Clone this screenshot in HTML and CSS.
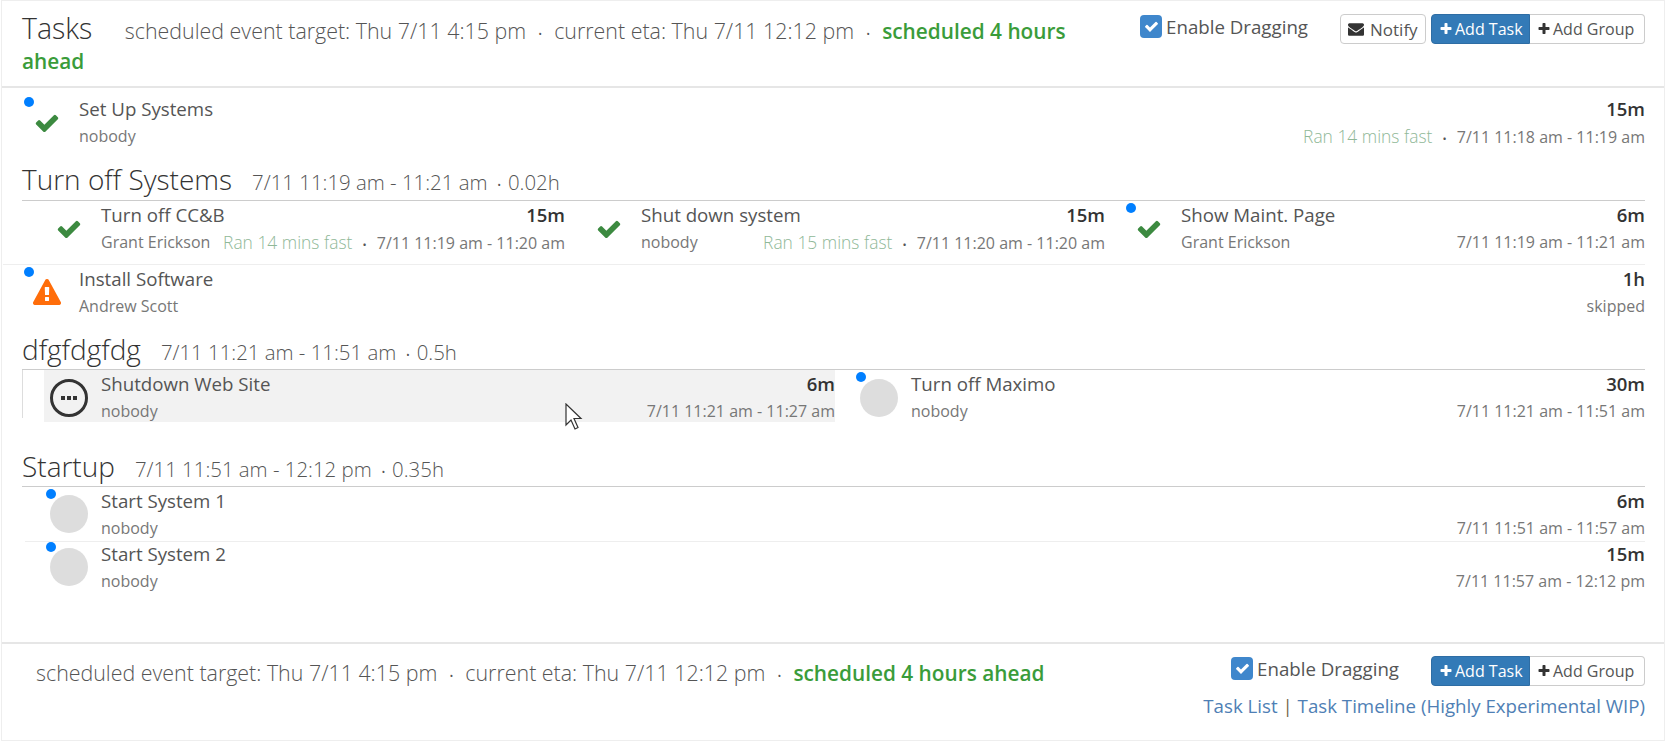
FILE: index.html
```html
<!DOCTYPE html>
<html lang="en">
<head>
    <meta charset="UTF-8">
    <title>Tasks</title>
    <link rel="stylesheet" href="styles.css">
</head>
<body>
<svg class="defs" width="0" height="0">
    <symbol id="i-check" viewBox="0 0 1792 1792"><path d="M1671 566q0 40-28 68l-724 724-136 136q-28 28-68 28t-68-28l-136-136-362-362q-28-28-28-68t28-68l136-136q28-28 68-28t68 28l294 295 656-657q28-28 68-28t68 28l136 136q28 28 28 68z"/></symbol>
    <symbol id="i-plus" viewBox="0 0 1792 1792"><path d="M1600 736v192q0 40-28 68t-68 28h-416v416q0 40-28 68t-68 28h-192q-40 0-68-28t-28-68v-416h-416q-40 0-68-28t-28-68v-192q0-40 28-68t68-28h416v-416q0-40 28-68t68-28h192q40 0 68 28t28 68v416h416q40 0 68 28t28 68z"/></symbol>
    <symbol id="i-mail" viewBox="0 0 1792 1792"><path d="M1792 710v794q0 66-47 113t-113 47h-1472q-66 0-113-47t-47-113v-794q44 49 101 87 362 246 497 345 57 42 92.5 65.5t94.5 48 110 24.5h2q51 0 110-24.5t94.5-48 92.5-65.5q170-123 498-345 57-39 100-87zm0-294q0 79-49 151t-122 123q-376 261-468 325-10 7-42.5 30.5t-54 38-52 32.5-57.5 27-50 9h-2q-23 0-50-9t-57.5-27-52-32.5-54-38-42.5-30.5q-91-64-262-182.5t-205-142.5q-62-42-117-115.5t-55-136.5q0-78 41.5-130t118.5-52h1472q65 0 112.5 47t47.5 113z"/></symbol>
    <symbol id="i-warn" viewBox="0 0 1792 1792"><path d="M1024 1375v-190q0-14-9.5-23.5t-22.5-9.5h-192q-13 0-22.5 9.5t-9.5 23.5v190q0 14 9.5 23.5t22.5 9.5h192q13 0 22.5-9.5t9.5-23.5zm-2-374l18-459q0-12-10-19-13-11-24-11h-220q-11 0-24 11-10 7-10 21l17 457q0 10 10 16.5t24 6.5h185q14 0 23.5-6.5t10.5-16.5zm-14-934l768 1408q35 63-2 126-17 29-46.5 46t-63.5 17h-1536q-34 0-63.5-17t-46.5-46q-37-63-2-126l768-1408q17-31 47-49t65-18 65 18 47 49z"/></symbol>
</svg>

<div class="panel">
    <!--top bar-->
    <div class="bar">
        <div class="bar-text">
            <span class="title">Tasks</span>
            <span class="meta">scheduled event target: Thu 7/11 4:15 pm <span class="sep">•</span> current eta: Thu 7/11 12:12 pm <span class="sep">•</span></span>
            <b class="ahead">scheduled 4 hours</b>
            <b class="ahead">ahead</b>
        </div>
        <div class="tools">
            <span class="drag"><span class="box"><svg><use href="#i-check"/></svg></span>Enable Dragging</span>
            <span class="btn notify"><svg><use href="#i-mail"/></svg>Notify</span>
            <span class="btn-group">
                <span class="btn primary"><svg><use href="#i-plus"/></svg>Add Task</span>
                <span class="btn"><svg><use href="#i-plus"/></svg>Add Group</span>
            </span>
        </div>
    </div>

    <div class="main">
        <div class="task">
            <div class="slot"><i class="dot"></i><svg class="ok"><use href="#i-check"/></svg></div>
            <div class="info">
                <div class="line"><span class="name">Set Up Systems</span><b class="dur">15m</b></div>
                <div class="line sub"><span>nobody</span><span><span class="fast">Ran 14 mins fast</span> <span class="sep">•</span> 7/11 11:18 am - 11:19 am</span></div>
            </div>
        </div>

        <div class="group first">
            <h2><span class="gname">Turn off Systems</span><span class="gmeta">7/11 11:19 am - 11:21 am <span class="sep">•</span> 0.02h</span></h2>
            <div class="cols three">
                <div class="task">
                    <div class="slot"><svg class="ok"><use href="#i-check"/></svg></div>
                    <div class="info">
                        <div class="line"><span class="name">Turn off CC&amp;B</span><b class="dur">15m</b></div>
                        <div class="line sub"><span>Grant Erickson</span><span><span class="fast">Ran 14 mins fast</span> <span class="sep">•</span> 7/11 11:19 am - 11:20 am</span></div>
                    </div>
                </div>
                <div class="task">
                    <div class="slot"><svg class="ok"><use href="#i-check"/></svg></div>
                    <div class="info">
                        <div class="line"><span class="name">Shut down system</span><b class="dur">15m</b></div>
                        <div class="line sub"><span>nobody</span><span><span class="fast">Ran 15 mins fast</span> <span class="sep">•</span> 7/11 11:20 am - 11:20 am</span></div>
                    </div>
                </div>
                <div class="task">
                    <div class="slot"><i class="dot"></i><svg class="ok"><use href="#i-check"/></svg></div>
                    <div class="info">
                        <div class="line"><span class="name">Show Maint. Page</span><b class="dur">6m</b></div>
                        <div class="line sub"><span>Grant Erickson</span><span>7/11 11:19 am - 11:21 am</span></div>
                    </div>
                </div>
            </div>
        </div>

        <div class="task split">
            <div class="slot"><i class="dot"></i><svg class="warn"><use href="#i-warn"/></svg></div>
            <div class="info">
                <div class="line"><span class="name">Install Software</span><b class="dur">1h</b></div>
                <div class="line sub"><span>Andrew Scott</span><span>skipped</span></div>
            </div>
        </div>

        <div class="group second">
            <h2><span class="gname">dfgfdgfdg</span><span class="gmeta">7/11 11:21 am - 11:51 am <span class="sep">•</span> 0.5h</span></h2>
            <div class="cols two">
                <div class="task active">
                    <div class="slot">
                        <span class="running"><i></i><i></i><i></i></span>
                    </div>
                    <div class="info">
                        <div class="line"><span class="name">Shutdown Web Site</span><b class="dur">6m</b></div>
                        <div class="line sub"><span>nobody</span><span>7/11 11:21 am - 11:27 am</span></div>
                    </div>
                </div>
                <div class="task">
                    <div class="slot"><i class="dot"></i><span class="todo"></span></div>
                    <div class="info">
                        <div class="line"><span class="name">Turn off Maximo</span><b class="dur">30m</b></div>
                        <div class="line sub"><span>nobody</span><span>7/11 11:21 am - 11:51 am</span></div>
                    </div>
                </div>
            </div>
        </div>

        <div class="group third">
            <h2><span class="gname">Startup</span><span class="gmeta">7/11 11:51 am - 12:12 pm <span class="sep">•</span> 0.35h</span></h2>
            <div class="cols one">
                <div class="task">
                    <div class="slot"><i class="dot"></i><span class="todo"></span></div>
                    <div class="info">
                        <div class="line"><span class="name">Start System 1</span><b class="dur">6m</b></div>
                        <div class="line sub"><span>nobody</span><span>7/11 11:51 am - 11:57 am</span></div>
                    </div>
                </div>
                <div class="task split">
                    <div class="slot"><i class="dot"></i><span class="todo"></span></div>
                    <div class="info">
                        <div class="line"><span class="name">Start System 2</span><b class="dur">15m</b></div>
                        <div class="line sub"><span>nobody</span><span>7/11 11:57 am - 12:12 pm</span></div>
                    </div>
                </div>
            </div>
        </div>
    </div>

    <!--bottom bar-->
    <div class="foot">
        <div class="meta">scheduled event target: Thu 7/11 4:15 pm <span class="sep">•</span> current eta: Thu 7/11 12:12 pm <span class="sep">•</span> <b class="ahead">scheduled 4 hours ahead</b></div>
        <div class="foot-right">
            <div class="tools">
                <span class="drag"><span class="box"><svg><use href="#i-check"/></svg></span>Enable Dragging</span>
                <span class="btn-group">
                    <span class="btn primary"><svg><use href="#i-plus"/></svg>Add Task</span>
                    <span class="btn"><svg><use href="#i-plus"/></svg>Add Group</span>
                </span>
            </div>
            <div class="links"><a>Task List</a> <span class="pipe">|</span> <a>Task Timeline (Highly Experimental WIP)</a></div>
        </div>
    </div>

    <!--mouse pointer caught in the capture-->
    <svg class="pointer" width="18" height="27" viewBox="0 0 18 27"><path d="M1 1v21l5-5 4 9 3-1.500-4-9h7z" fill="#fff" stroke="#333" stroke-width="1.200"/></svg>
</div>
</body>
</html>
```

FILE: styles.css
```css
*{
    margin: 0;
    padding: 0;
    box-sizing: border-box;
}
body
{
    background: #fff;
    font-family: "Open Sans", sans-serif;
    color: #444;
    overflow: hidden;
}
.defs
{
    display: block;
    height: 0;
}
.panel
{
    position: relative;
    width: 1664px;
    height: 741px;
    margin-left: 1px;
    border: 1px solid #eee;
    display: flex;
    flex-direction: column;
}
.bar
{
    height: 87px;
    padding: 0 19px 0 20px;
    border-bottom: 2px solid #e6e6e6;
    display: flex;
    justify-content: space-between;
    align-items: flex-start;
}
.bar-text
{
    width: 1060px;
    margin-top: 15px;
    font-size: 21px;
    line-height: 30px;
}
.title
{
    font-size: 28.500px;
    font-weight: 300;
    line-height: 24px;
    color: #333;
    margin-right: 27px;
}
.meta
{
    font-size: 21.400px;
    font-weight: 300;
    line-height: 30px;
    color: #555;
}
.ahead
{
    font-size: 20.800px;
    font-weight: 600;
    color: #3a9c3a;
}
.sep
{
    font-size: 13px;
    line-height: 1;
    margin: 0 6px;
    color: #555;
}
.tools
{
    display: flex;
    align-items: flex-start;
    margin-top: 13px;
}
.foot .tools
{
    margin-top: 2px;
}
.drag
{
    display: flex;
    align-items: center;
    height: 23px;
    margin-top: 1px;
    font-size: 18.700px;
    color: #555;
    margin-right: 32px;
}
.box
{
    width: 22px;
    height: 23px;
    margin-right: 4px;
    border-radius: 4px;
    background: #3f87cc;
    display: flex;
    align-items: center;
    justify-content: center;
}
.box svg
{
    width: 15px;
    height: 15px;
    fill: #fff;
}
.btn
{
    height: 30px;
    padding: 0 6px 0 7px;
    border: 1px solid #ccc;
    background: #fff;
    font-size: 16px;
    color: #555;
    display: inline-flex;
    align-items: center;
    white-space: nowrap;
}
.btn svg
{
    width: 14px;
    height: 14px;
    margin-right: 2px;
    fill: #333;
}
.notify
{
    width: 86px;
    margin-right: 5px;
    border-radius: 4px;
    font-size: 17px;
}
.notify svg
{
    width: 16px;
    height: 16px;
    margin-right: 6px;
}
.btn-group
{
    display: flex;
}
.btn-group .btn
{
    width: 115px;
    border-radius: 0 4px 4px 0;
    border-left: 0;
}
.btn-group .primary
{
    width: 99px;
    background: #337ab7;
    border: 1px solid #2e6da4;
    border-radius: 4px 0 0 4px;
    color: #fff;
}
.primary svg
{
    fill: #fff;
}
.main
{
    flex: 1;
    padding: 7px 19px 0 1px;
}
.task
{
    position: relative;
    height: 52px;
    padding-top: 2px;
    display: flex;
}
.split
{
    height: 53px;
    border-top: 1px solid #eee;
}
.slot
{
    position: relative;
    flex: none;
    width: 76px;
    height: 50px;
    padding: 4px 0 0 25px;
}
.two .slot
{
    padding-top: 7px;
}
.one .slot
{
    padding-top: 6px;
}
.dot
{
    position: absolute;
    left: 21px;
    top: 0;
    width: 10px;
    height: 10px;
    border-radius: 50%;
    background: #007fff;
}
.ok
{
    display: block;
    width: 26px;
    height: 26px;
    margin: 9px 0 0 6px;
    fill: #3c8a40;
}
.warn
{
    display: block;
    width: 28px;
    height: 28px;
    margin: 8px 0 0 5px;
    fill: #ff6d0a;
}
.todo
{
    display: block;
    width: 38px;
    height: 38px;
    border-radius: 50%;
    background: #ddd;
}
.running
{
    width: 38px;
    height: 38px;
    border: 3px solid #333;
    border-radius: 50%;
    display: flex;
    align-items: center;
    justify-content: center;
    gap: 2px;
}
.running i
{
    width: 4px;
    height: 4px;
    background: #333;
}
.info
{
    flex: 1;
    min-width: 0;
}
.line
{
    display: flex;
    justify-content: space-between;
    height: 24px;
    line-height: 24px;
    white-space: nowrap;
}
.name
{
    font-size: 18.700px;
    color: #555;
}
.dur
{
    font-size: 18.500px;
    font-weight: 600;
    color: #333;
}
.sub
{
    height: 23px;
    margin-top: 3px;
    font-size: 16px;
    color: #777;
}
.sub .sep
{
    font-size: 11px;
}
.fast
{
    font-size: 17.400px;
    font-weight: 300;
    color: #8fb897;
}
.group
{
    margin-left: 19px;
}
.first
{
    margin-top: 15px;
    margin-bottom: 11px;
}
.second
{
    margin-top: 14px;
}
.third
{
    margin-top: 27px;
}
h2
{
    height: 39px;
    line-height: 36px;
    font-weight: 300;
    border-bottom: 1.500px solid #ccc;
    display: flex;
    align-items: baseline;
}
.first h2
{
    line-height: 34px;
}
.third h2
{
    height: 38px;
    line-height: 34px;
}
.gname
{
    font-size: 28px;
    color: #333;
    margin-right: 20px;
}
.gmeta
{
    font-size: 20.400px;
    color: #555;
}
.gmeta .sep
{
    margin: 0 1px 0 4px;
}
.cols
{
    display: grid;
    padding-left: 3px;
}
.three
{
    grid-template-columns: repeat(3,1fr);
}
.two
{
    grid-template-columns: repeat(2,1fr);
    background: linear-gradient(#ddd,#ddd) 0 0/1px 48px no-repeat;
}
.one
{
    grid-template-columns: 1fr;
}
.one .task:first-child
{
    height: 54px;
}
.one .split
{
    padding-top: 0;
}
.active
{
    background: linear-gradient(90deg,transparent 19px,#f2f2f2 19px);
}
.foot
{
    height: 98px;
    padding: 10px 19px 0 34px;
    border-top: 2px solid #e6e6e6;
    display: flex;
    justify-content: space-between;
    align-items: flex-start;
}
.foot .meta
{
    margin-top: 4px;
}
.foot-right
{
    display: flex;
    flex-direction: column;
    align-items: flex-end;
}
.links
{
    margin-top: 7px;
    font-size: 18.700px;
    color: #888;
}
.links a
{
    color: #4f7fb5;
}
.pipe
{
    color: #7a6a4f;
}
.pointer
{
    position: absolute;
    left: 563px;
    top: 402px;
}
```
